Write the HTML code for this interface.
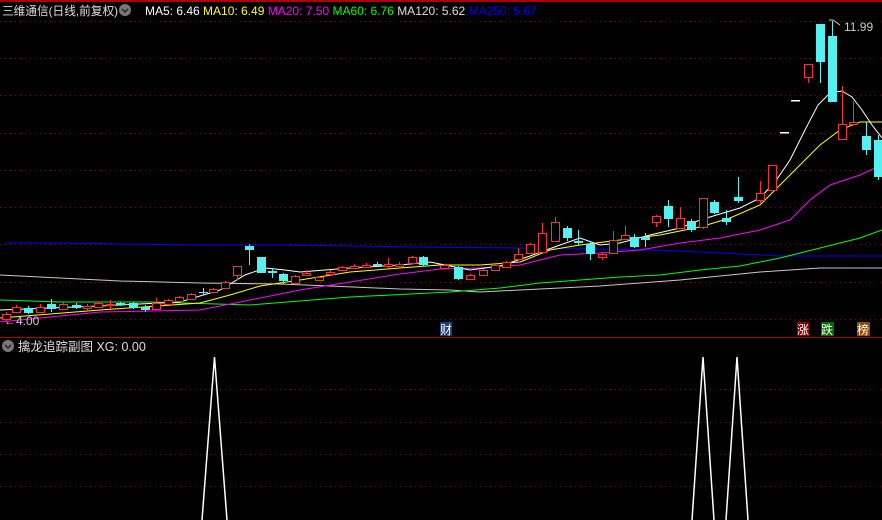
<!DOCTYPE html>
<html><head><meta charset="utf-8"><style>
html,body{margin:0;padding:0;background:#000;width:882px;height:520px;overflow:hidden}
svg{display:block}
text{font-family:"Liberation Sans","Noto Sans CJK SC",sans-serif}
</style></head><body>
<svg id="s" width="882" height="520" xmlns="http://www.w3.org/2000/svg">
<rect width="882" height="520" fill="#000"/>
<rect x="0" y="0" width="882" height="2" fill="#b00000"/>
<g stroke="#8a0000" stroke-width="1" stroke-dasharray="1,4">
<line x1="0" y1="21.5" x2="882" y2="21.5"/><line x1="0" y1="58.5" x2="882" y2="58.5"/><line x1="0" y1="95.5" x2="882" y2="95.5"/><line x1="0" y1="133.5" x2="882" y2="133.5"/><line x1="0" y1="170.5" x2="882" y2="170.5"/><line x1="0" y1="207.5" x2="882" y2="207.5"/><line x1="0" y1="244.5" x2="882" y2="244.5"/><line x1="0" y1="282.5" x2="882" y2="282.5"/><line x1="25" y1="319.5" x2="882" y2="319.5"/>
<line x1="0" y1="389.5" x2="882" y2="389.5"/><line x1="0" y1="422.5" x2="882" y2="422.5"/><line x1="0" y1="454.5" x2="882" y2="454.5"/><line x1="0" y1="486.5" x2="882" y2="486.5"/>
</g>
<rect x="0" y="337" width="882" height="1" fill="#b00000"/>
<g fill="none" stroke-width="1">
<polyline stroke="#0000ff" points="5,243 60,243 120,244 200,245 280,245 350,246 420,247 520,248 650,250 700,252 780,256 882,256"/>
<polyline stroke="#c8c8c8" points="0,275 60,278 120,281 200,283 280,284 330,286 400,289 450,290 480,292 540,289 600,286 680,280 760,272 820,268 882,268"/>
<polyline stroke="#00ff00" points="0,300 60,302 150,302 250,305 350,297 450,292 500,288 540,283 580,280 620,277 660,275 700,270 740,266 780,258 820,248 860,238 882,230"/>
<polyline stroke="#ff00ff" points="0,322 100,312 200,310 250,300 300,290 350,282 400,274 440,269 480,268 520,265 560,255 600,253 640,250 680,243 720,238 760,230 790,220 810,200 830,185 860,175 882,165"/>
<polyline stroke="#ffff00" points="0,318 100,310 200,303 230,295 260,286 300,280 350,272 400,268 440,265 480,265 520,262 550,250 580,245 620,240 660,235 700,227 730,218 760,205 780,185 800,165 820,145 840,130 860,122 882,122"/>
<polyline stroke="#ffffff" points="0,310 100,306 180,302 220,290 245,275 265,268 285,270 300,272 350,268 400,265 430,262 450,266 470,270 500,266 530,256 560,245 580,238 600,245 620,243 650,235 680,228 700,220 720,214 740,208 760,198 775,182 790,160 805,130 818,105 830,93 842,91 852,97 862,110 872,125 882,138"/>
</g>
<g id="c"></g>
<g fill="#fff"><rect x="791" y="100" width="9" height="1.5"/><rect x="780" y="132" width="9" height="1.5"/></g>
<polyline points="829,20 833,20 840,25" fill="none" stroke="#ccc"/>
<text x="844" y="31" fill="#ccc" font-size="12">11.99</text>
<text x="4" y="325" fill="#ccc" font-size="12">←4.00</text>
<text x="2" y="15" fill="#ddd" font-size="12" textLength="116" lengthAdjust="spacingAndGlyphs">三维通信(日线,前复权)</text>
<circle cx="125" cy="10" r="6" fill="#777"/><path d="M122,9 L125,12 L128,9" stroke="#222" stroke-width="1.5" fill="none"/>
<text x="145" y="15" font-size="12"><tspan fill="#fff">MA5: 6.46 </tspan><tspan fill="#ffff00">MA10: 6.49 </tspan><tspan fill="#ff00ff">MA20: 7.50 </tspan><tspan fill="#00ff00">MA60: 6.76 </tspan><tspan fill="#ddd">MA120: 5.62 </tspan><tspan fill="#0000ff">MA250: 5.67</tspan></text>
<rect x="440" y="322" width="12" height="14" fill="#1a3a7a"/><text x="440" y="334" fill="#fff" font-size="12">财</text>
<rect x="797" y="322" width="12" height="14" fill="#8a0000"/><text x="797" y="334" fill="#fff" font-size="12">涨</text>
<rect x="821" y="322" width="13" height="14" fill="#006a00"/><text x="821" y="334" fill="#fff" font-size="12">跌</text>
<rect x="857" y="322" width="13" height="14" fill="#8a4a00"/><text x="857" y="334" fill="#fff" font-size="12">榜</text>
<circle cx="8" cy="346" r="6" fill="#777"/><path d="M5,345 L8,348 L11,345" stroke="#222" stroke-width="1.5" fill="none"/>
<text x="18" y="351" fill="#ddd" font-size="12.5">擒龙追踪副图 XG: 0.00</text>
<g fill="none" stroke="#fff" stroke-width="1.5">
<polyline points="202,520 214.5,357 227,520"/>
<polyline points="692,520 703,357 714,520"/>
<polyline points="726,520 737,357 748,520"/>
</g>
</svg>
<script>
var d=[[6,314,319,312,321,1],[16,307,312,305,313,1],[28,308,313,306,314,0],[40,307,312,304,313,1],[51,304,309,299,312,0],[63,304,309,302,310,1],[76,305,308,303,309,0],[87,306,308,304,310,1],[98,303,307,302,308,1],[110,304,305,300,309,1],[120,303,305,302,306,0],[133,303,308,302,309,0],[145,307,310,305,312,0],[156,303,309,298,310,1],[168,300,304,299,305,1],[179,297,301,296,302,1],[191,294,299,293,300,1],[203,292,293,288,295,0],[213,289,292,288,293,1],[225,282,288,281,289,1],[237,266,275,266,280,1],[249,246,250,244,265,0],[261,257,273,257,273,0],[272,271,273,268,278,0],[283,274,281,273,284,0],[295,276,283,275,284,1],[306,273,275,270,276,1],[319,277,280,276,281,1],[330,272,274,270,276,1],[342,267,270,266,271,1],[354,266,268,264,269,1],[366,265,267,263,268,1],[377,264,266,262,267,0],[388,264,266,258,268,1],[399,264,266,262,267,1],[412,257,263,256,264,1],[423,257,265,256,266,0],[444,265,268,264,269,1],[458,267,279,266,280,0],[470,275,279,274,280,1],[483,270,275,269,276,1],[495,265,270,264,271,1],[506,262,267,261,268,1],[518,254,259,248,260,1],[530,244,253,243,254,1],[542,233,252,223,253,1],[555,222,241,217,242,1],[567,228,238,226,241,0],[578,241,243,230,245,0],[590,244,254,241,260,0],[602,254,257,252,260,1],[613,240,253,231,254,1],[625,235,239,226,240,1],[634,237,247,234,248,0],[645,237,240,233,247,0],[656,216,222,215,227,1],[668,206,219,200,227,0],[680,218,228,207,229,1],[691,221,230,219,232,0],[703,198,227,198,229,1],[714,202,213,200,214,0],[726,218,222,210,225,0],[738,197,201,177,203,0],[760,193,200,181,203,1],[772,165,190,165,190,1],[808,64,77,64,83,1],[820,24,62,24,83,0],[832,36,102,21,102,0],[842,124,139,86,139,1],[853,122,124,101,124,1],[866,136,150,122,155,0],[878,140,177,135,180,0]];
var g=document.getElementById('c'),h='';
d.forEach(function(c){var x=c[0],col=c[5]?'#ff3030':'#55f0f0';
h+='<line x1="'+(x+.5)+'" y1="'+c[3]+'" x2="'+(x+.5)+'" y2="'+c[4]+'" stroke="'+col+'"/>';
var hh=Math.max(c[2]-c[1],1);
if(c[5])h+='<rect x="'+(x-3.5)+'" y="'+(c[1]+.5)+'" width="8" height="'+hh+'" fill="#000" stroke="'+col+'"/>';
else h+='<rect x="'+(x-4)+'" y="'+c[1]+'" width="9" height="'+hh+'" fill="'+col+'"/>';});
g.innerHTML=h;
</script>
</body></html>
